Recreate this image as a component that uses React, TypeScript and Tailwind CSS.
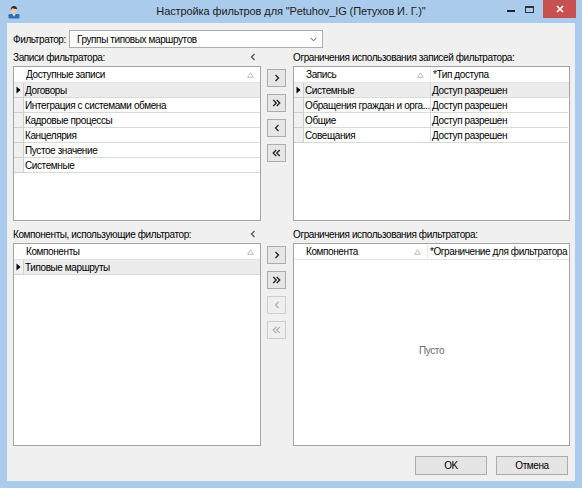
import React from "react";

type Col = { title: string; width?: number; sort?: boolean };

function SortMark() {
  return (
    <svg width="7" height="6" viewBox="0 0 7 6" className="shrink-0">
      <path d="M3.5 0.8 L6.3 5.3 L0.7 5.3 Z" fill="none" stroke="#b4b4b4" strokeWidth="0.9" />
    </svg>
  );
}

function RowMark() {
  return (
    <svg width="5" height="8" viewBox="0 0 5 8">
      <path d="M0.5 0.5 L4.5 4 L0.5 7.5 Z" fill="#000" />
    </svg>
  );
}

function Chevron({ dir, double, color }: { dir: "left" | "right"; double?: boolean; color: string }) {
  const single = dir === "right" ? "M1.5 1 L4.5 4 L1.5 7" : "M4.5 1 L1.5 4 L4.5 7";
  const dbl =
    dir === "right"
      ? "M1 1 L4 4 L1 7 M4.5 1 L7.5 4 L4.5 7"
      : "M4 1 L1 4 L4 7 M7.5 1 L4.5 4 L7.5 7";
  return (
    <svg width={double ? 9 : 6} height="8" viewBox={double ? "0 0 8.5 8" : "0 0 6 8"}>
      <path d={double ? dbl : single} fill="none" stroke={color} strokeWidth="1.3" />
    </svg>
  );
}

function DataGrid({
  cols,
  rows,
  height,
  empty,
}: {
  cols: Col[];
  rows: string[][];
  height: number;
  empty?: string;
}) {
  return (
    <div
      className="relative border border-[#a3a3a3] bg-white overflow-hidden flex flex-col"
      style={{ height }}
    >
      <div className="flex h-[16px] shrink-0 items-center border-b border-[#e3e3e3]">
        <div className="w-[10px] shrink-0" />
        {cols.map((c, i) => (
          <div
            key={i}
            className={
              "flex h-full items-center pl-[2px] pr-[6px] overflow-hidden whitespace-nowrap " +
              (c.width ? "shrink-0" : "flex-1") +
              (i < cols.length - 1 ? " border-r border-[#ececec]" : "")
            }
            style={c.width ? { width: c.width } : undefined}
          >
            <span className="flex-1 overflow-hidden">{c.title}</span>
            {c.sort && <SortMark />}
          </div>
        ))}
      </div>
      {rows.map((r, ri) => (
        <div key={ri} className={"flex h-[15px] shrink-0 " + (ri === 0 ? "bg-[#ececec]" : "")}>
          <div className="flex w-[10px] shrink-0 items-center justify-center border-r border-b border-[#cfcfcf] bg-[#f0f0f0]">
            {ri === 0 && <RowMark />}
          </div>
          {r.map((cell, ci) => (
            <div
              key={ci}
              className={
                "flex items-center pl-[1px] overflow-hidden whitespace-nowrap border-b border-[#d9d9d9] " +
                (cols[ci].width ? "shrink-0" : "flex-1") +
                (ci < r.length - 1 ? " border-r" : "")
              }
              style={cols[ci].width ? { width: cols[ci].width } : undefined}
            >
              {cell}
            </div>
          ))}
        </div>
      ))}
      {empty && (
        <div className="flex flex-1 items-center justify-center pb-[4px] text-[#6d6d6d]">{empty}</div>
      )}
    </div>
  );
}

function MoveButton({ dir, double, disabled }: { dir: "left" | "right"; double?: boolean; disabled?: boolean }) {
  return (
    <div
      className={
        "flex h-[18px] w-[19px] items-center justify-center border " +
        (disabled ? "border-[#cdcdcd] bg-[#efefef]" : "border-[#acacac] bg-[#e6e6e6]")
      }
    >
      <Chevron dir={dir} double={double} color={disabled ? "#b0b0b0" : "#222"} />
    </div>
  );
}

function ButtonColumn({ disabledLower }: { disabledLower?: boolean }) {
  return (
    <div className="flex flex-col gap-[7px] pl-[6px] pt-[3px]">
      <MoveButton dir="right" />
      <MoveButton dir="right" double />
      <MoveButton dir="left" disabled={disabledLower} />
      <MoveButton dir="left" double disabled={disabledLower} />
    </div>
  );
}

function UserIcon() {
  return (
    <svg width="14" height="14" viewBox="0 0 14 14">
      <rect x="1.5" y="9" width="11" height="4.5" rx="1.2" fill="#2f6fb3" />
      <path d="M5.5 9 L7 11.5 L8.5 9 Z" fill="#fff" />
      <circle cx="7" cy="5.5" r="3" fill="#f1c9a5" />
      <path d="M3.8 5 C3.8 2 5.2 1 7 1 C8.8 1 10.2 2 10.2 5 L9.6 4 C8.5 4 6.5 3.6 5.5 3 L4.4 4.6 Z" fill="#2b2b2b" />
    </svg>
  );
}

function SectionLabel({ text, collapse, top }: { text: string; collapse?: boolean; top?: boolean }) {
  return (
    <div className={"flex h-[18px] items-center justify-between whitespace-nowrap pr-[5px] " + (top ? "" : "mt-[4px]")}>
      <span>{text}</span>
      {collapse && <Chevron dir="left" color="#555" />}
    </div>
  );
}

export default function App() {
  return (
    <div className="w-[582px] h-[488px] bg-[#aacbec] flex flex-col font-['Liberation_Sans',Arial,sans-serif] text-[10px] tracking-[-0.4px] text-black select-none">
      <div className="relative flex h-[23px] shrink-0 items-center">
        <div className="pl-[7px] pt-[1px]">
          <UserIcon />
        </div>
        <div className="absolute inset-x-0 top-0 flex h-[23px] items-center justify-center text-[11px] tracking-[-0.1px] text-[#1b1b1b]">
          Настройка фильтров для "Petuhov_IG (Петухов И. Г.)"
        </div>
        <div className="absolute right-[6px] top-0 flex items-start">
          <div className="flex h-[18px] w-[19px] items-center justify-center">
            <div className="mt-[4px] h-[2px] w-[8px] bg-[#222]" />
          </div>
          <div className="flex h-[18px] w-[19px] items-center justify-center">
            <div className="h-[7px] w-[9px] border border-[#333] border-t-2" />
          </div>
          <div className="ml-[4px] flex h-[18px] w-[33px] items-center justify-center bg-[#c75050]">
            <svg width="8" height="8" viewBox="0 0 8 8">
              <path d="M1 1 L7 7 M7 1 L1 7" stroke="#fff" strokeWidth="1.6" />
            </svg>
          </div>
        </div>
      </div>

      <div className="mx-[7px] mb-[7px] flex flex-1 flex-col bg-[#f0f0f0] px-[6px] pt-[7px]">
        <div className="flex h-[18px] items-center">
          <div className="w-[56px] shrink-0 whitespace-nowrap">Фильтратор:</div>
          <div className="flex h-[18px] w-[254px] items-center border border-[#acacac] bg-white pl-[7px] pr-[5px]">
            <span className="flex-1">Группы типовых маршрутов</span>
            <svg width="7" height="5" viewBox="0 0 7 5">
              <path d="M0.5 0.8 L3.5 3.8 L6.5 0.8" fill="none" stroke="#555" strokeWidth="1" />
            </svg>
          </div>
        </div>

        <div className="grid grid-cols-[248px_32px_277px]">
          <SectionLabel text="Записи фильтратора:" collapse top />
          <div />
          <SectionLabel text="Ограничения использования записей фильтратора:" top />

          <DataGrid
            cols={[{ title: "Доступные записи", sort: true }]}
            rows={[
              ["Договоры"],
              ["Интеграция с системами обмена"],
              ["Кадровые процессы"],
              ["Канцелярия"],
              ["Пустое значение"],
              ["Системные"],
            ]}
            height={155}
          />
          <ButtonColumn />
          <DataGrid
            cols={[
              { title: "Запись", width: 127, sort: true },
              { title: "*Тип доступа", width: 137 },
            ]}
            rows={[
              ["Системные", "Доступ разрешен"],
              ["Обращения граждан и орга...", "Доступ разрешен"],
              ["Общие", "Доступ разрешен"],
              ["Совещания", "Доступ разрешен"],
            ]}
            height={155}
          />

          <SectionLabel text="Компоненты, использующие фильтратор:" collapse />
          <div />
          <SectionLabel text="Ограничения использования фильтратора:" />

          <DataGrid
            cols={[{ title: "Компоненты", sort: true }]}
            rows={[["Типовые маршруты"]]}
            height={203}
          />
          <ButtonColumn disabledLower />
          <DataGrid
            cols={[
              { title: "Компонента", width: 124, sort: true },
              { title: "*Ограничение для фильтратора", width: 160 },
            ]}
            rows={[]}
            height={203}
            empty="Пусто"
          />
        </div>

        <div className="mt-[10px] flex justify-end gap-[9px] pr-[1px]">
          <div className="flex h-[19px] w-[72px] items-center justify-center border border-[#acacac] bg-[#e5e5e5]">OK</div>
          <div className="flex h-[19px] w-[72px] items-center justify-center border border-[#acacac] bg-[#e5e5e5]">Отмена</div>
        </div>
      </div>
    </div>
  );
}
